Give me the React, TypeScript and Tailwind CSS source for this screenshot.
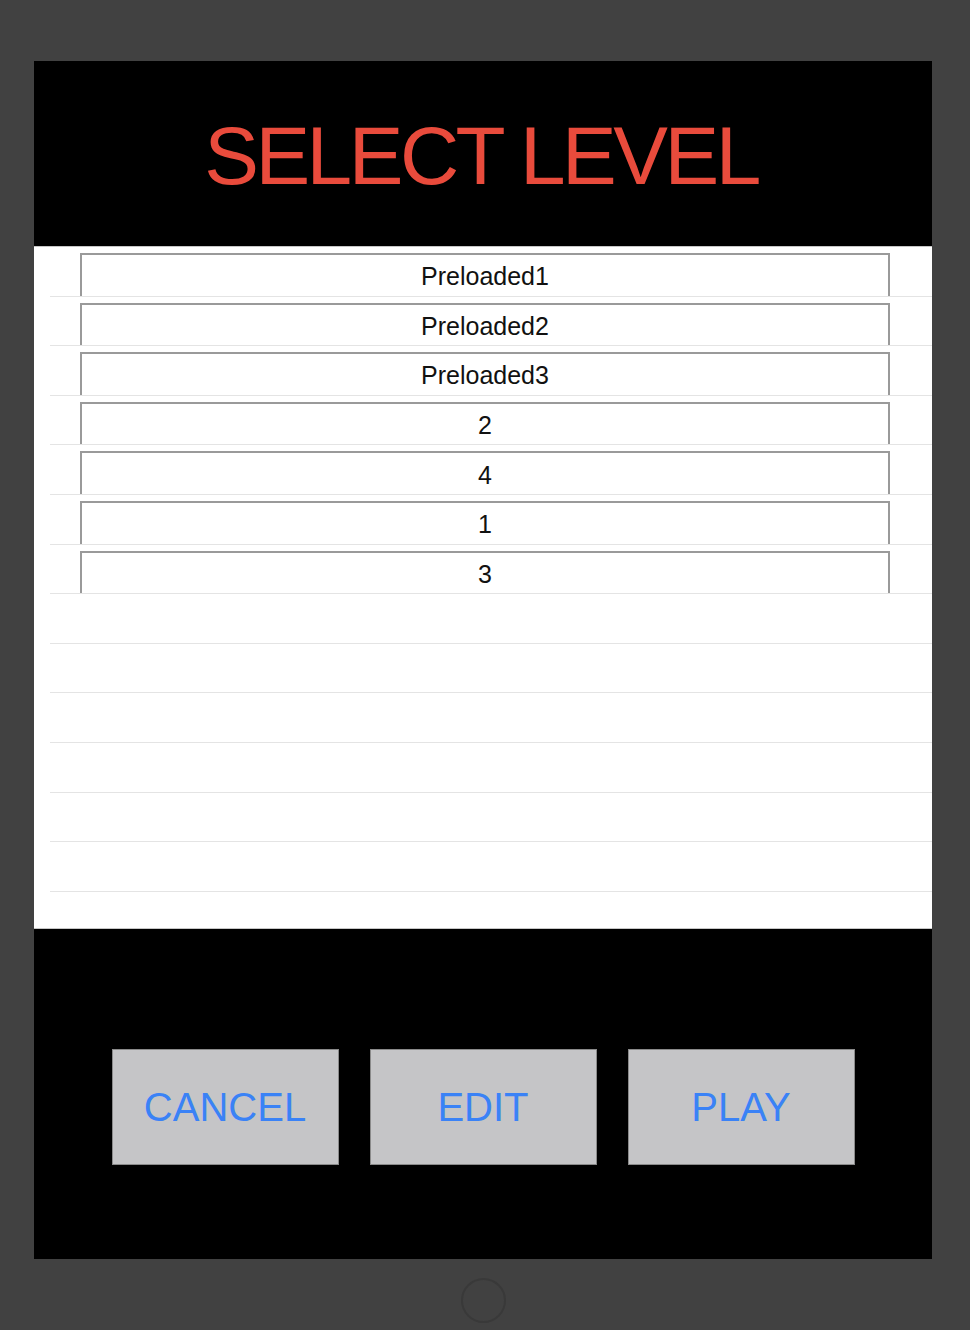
const levels = ['Preloaded1', 'Preloaded2', 'Preloaded3', '2', '4', '1', '3']
const emptyRows = 6

function LevelRow({ name }: { name?: string }) {
  return (
    <div className="h-[49.6px] border-b border-[#e4e4e4] flex flex-col">
      {name !== undefined && (
        <div className="ml-[30px] mt-[6px] w-[810px] flex-1 border-t-2 border-l-2 border-r-2 border-[#9a9a9a] flex items-center justify-center pt-[3px]">
          <span className="text-[25px] leading-none text-[#111]">{name}</span>
        </div>
      )}
    </div>
  )
}

function ActionButton({ label }: { label: string }) {
  return (
    <button
      type="button"
      className="w-[227px] h-[116px] bg-[#c5c5c7] border border-[#8a8a8a] flex items-center justify-center text-[40px] text-[#3a82f6]"
    >
      {label}
    </button>
  )
}

export default function App() {
  return (
    <div
      className="w-[970px] h-[1330px] bg-[#414141] flex flex-col items-start pl-[34px] pt-[61px]"
      style={{ fontFamily: '"Liberation Sans", Arial, sans-serif' }}
    >
      <div className="w-[898px] h-[1198px] bg-black flex flex-col">
        <div className="h-[185px] flex items-center justify-center pr-[4px]">
          <h1 className="text-[82px] leading-none tracking-[-3.5px] text-[#e94b3c] pt-[4px]">SELECT LEVEL</h1>
        </div>

        <div className="h-[683px] bg-white border-t border-b border-[#c6c6c6] pl-[16px] overflow-hidden">
          {levels.map(l => (
            <LevelRow key={l} name={l} />
          ))}
          {Array.from({ length: emptyRows }).map((_, i) => (
            <LevelRow key={'e' + i} />
          ))}
        </div>

        <div className="flex-1 flex items-start justify-center gap-[31px] pt-[120px]">
          <ActionButton label="CANCEL" />
          <ActionButton label="EDIT" />
          <ActionButton label="PLAY" />
        </div>
      </div>

      <div className="mt-[19px] ml-[427px] w-[45px] h-[45px] rounded-full border-2 border-[#393939]" />
    </div>
  )
}
